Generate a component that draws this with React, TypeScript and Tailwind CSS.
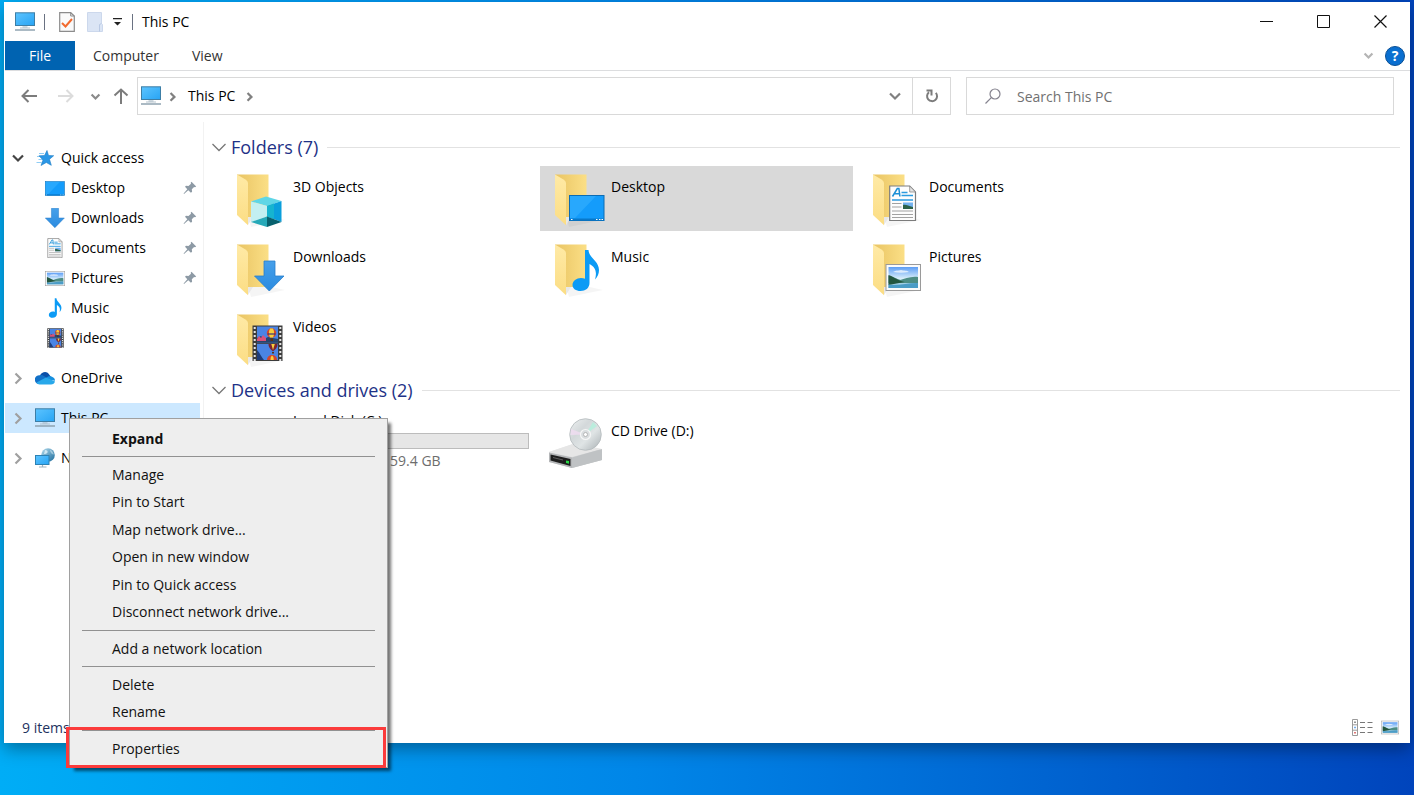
import { clsx } from 'clsx';
import type { ReactNode } from 'react';

/* ---------- shared gradients ---------- */

function Gradients() {
  return (
    <svg className="absolute size-0" aria-hidden="true">
      <defs>
        <linearGradient id="screen" x1="0" y1="0" x2="1" y2="1">
          <stop offset="0" stopColor="#5cc4ff" />
          <stop offset="1" stopColor="#28a4f4" />
        </linearGradient>
        <linearGradient id="folderBack" x1="0" y1="0" x2="1" y2="0">
          <stop offset="0" stopColor="#e9c463" />
          <stop offset="1" stopColor="#fbdf86" />
        </linearGradient>
        <linearGradient id="folderFlap" x1="0" y1="0" x2="0" y2="1">
          <stop offset="0" stopColor="#ffeaa6" />
          <stop offset="1" stopColor="#fbdd84" />
        </linearGradient>
        <linearGradient id="arrow" x1="0" y1="0" x2="0" y2="1">
          <stop offset="0" stopColor="#46a0ea" />
          <stop offset="1" stopColor="#2b8be0" />
        </linearGradient>
        <linearGradient id="sky" x1="0" y1="0" x2="0" y2="1">
          <stop offset="0" stopColor="#5c9df5" />
          <stop offset="0.55" stopColor="#d9eefb" />
          <stop offset="1" stopColor="#6fb0cf" />
        </linearGradient>
        <linearGradient id="disc" x1="0" y1="0" x2="1" y2="1">
          <stop offset="0" stopColor="#eef1f1" />
          <stop offset="0.35" stopColor="#d3d8da" />
          <stop offset="0.6" stopColor="#dfe4e5" />
          <stop offset="1" stopColor="#a9b0b3" />
        </linearGradient>
        <linearGradient id="drive" x1="0" y1="0" x2="1" y2="1">
          <stop offset="0" stopColor="#f1f1f1" />
          <stop offset="1" stopColor="#b9bcbf" />
        </linearGradient>
        <linearGradient id="globe" x1="0" y1="0" x2="1" y2="1">
          <stop offset="0" stopColor="#b4dcee" />
          <stop offset="1" stopColor="#1c6c9c" />
        </linearGradient>
      </defs>
    </svg>
  );
}

/* ---------- library artwork, drawn on the 50x54 folder canvas ---------- */

const DesktopArt = () => (
  <g>
    <rect x="14.5" y="21.5" width="34.5" height="25" fill="#149cfb" stroke="#0b6cb4" />
    <path d="M15 22h26L20 44h-5z" fill="#35b0ff" opacity=".6" />
    <path d="M15 44.5h34v2H15z" fill="#0878ca" />
    <path d="M16 45.5h1.5M41 45.5h1.5M44 45.5h1.5M46.5 45.5h1.5" stroke="#fff" />
  </g>
);

const DownloadArt = () => (
  <path d="M27 17h11v15h9L32.3 47 17.5 32H27z" fill="url(#arrow)" stroke="#2a7fcb" strokeWidth=".8" />
);

const DocumentArt = () => (
  <g>
    <path d="M16.7 12h20l5.800 6v28.500H16.700z" fill="#fdfdfd" stroke="#7c7c7c" strokeWidth="1.200" />
    <path d="M36.700 12v6h5.800z" fill="#e3e3e3" stroke="#8a8a8a" strokeWidth=".8" />
    <path d="m19.500 22.500 4.800-8h1.600l1 8m-5.200-2.700h4.700" fill="none" stroke="#1b8fd6" strokeWidth="1.500" />
    <path d="M28.500 18.500h6M28.500 21.500h11.500M19 26h21" stroke="#2b9be0" strokeWidth="1.600" />
    <path d="M19 29.500h9.500M19 33h9.500M19 37h21M19 40.500h21M19 43.500h21" stroke="#a2a2a2" strokeWidth="1.200" />
    <rect x="30" y="28.500" width="10" height="6.500" fill="#74b2ee" />
    <path d="M30 31c3-1 5 1 10 2v2H30z" fill="#2d6248" />
  </g>
);

const PictureArt = () => (
  <g>
    <rect x="13" y="20.500" width="34.500" height="26" fill="#fbfbfb" stroke="#9a9a9a" />
    <rect x="15.500" y="23" width="29.500" height="21" fill="url(#sky)" />
    <path d="M20 28c3-2 5-1 8-2 3 1 6 0 8 2-5 1-11 1-16 0z" fill="#fff" opacity=".7" />
    <path d="M15.500 32c5 0 8 3 12 4 4-1 10-4 17.500-3v6H15.500z" fill="#4d8d84" />
    <path d="M15.500 31c4 1 8 5 16 7l-16 3z" fill="#24563f" />
    <path d="M15.500 40.500c9 2 20-2 29.500-1.500v5H15.500z" fill="#4b9cc6" />
  </g>
);

const MusicArt = () => (
  <path
    d="M30 6h3.500c.5 8 10.500 11 10.500 20 0 4-1.500 7-4 9.500 2-7 1-12-5.500-15.500V39c0 5-4 8-9 8-4.500 0-8-2.300-8-6 0-4 4-7 8.500-7 1.500 0 2.800.2 4 .8z"
    fill="#0c9bf5"
  />
);

const VideoArt = () => (
  <g>
    <rect x="15.500" y="11.500" width="30" height="35.500" fill="#3c3c3c" />
    <path d="M17.700 13v34M43.300 13v34" stroke="#e4e4e4" strokeWidth="2" strokeDasharray="2 2" />
    <rect x="20" y="12.500" width="21" height="16" fill="#4a84e4" />
    <rect x="20" y="29.800" width="21" height="16.200" fill="#4a84e4" />
    <path d="M20 24l4-2 3 3 4-2 10 2v3.500H20z" fill="#27456e" />
    <path d="M20 25l2-3 2 2 2-3 3 3v3h-9z" fill="#d9527a" />
    <circle cx="34.500" cy="19" r="4.700" fill="#d4452c" />
    <path d="M33 14.500c-1.600 3-1.400 6 0 9h3c1.400-3 1.600-6 0-9z" fill="#f8cf3c" />
    <path d="M30.500 20h8" stroke="#3a2f7a" strokeWidth="1.200" />
    <path d="M33.500 24.500h2.500V27h-2.500z" fill="#5a3114" />
    <path d="M31.500 30h9c0 4-2.300 5.500-4.500 7.500-2-2-4.500-3.500-4.500-7.500z" fill="#7b2433" />
    <path d="M34.300 30h3.500L36 36z" fill="#f8cf3c" />
    <path d="M35 38h2v1.500h-2z" fill="#5a3114" />
    <path d="M30 46c0-3.500 2.500-5 5-5s5 1.500 5 5z" fill="#d4452c" />
    <path d="M33.500 46c0-2.500.5-3.800 1.500-4.500 1.200.7 1.700 2 1.700 4.500z" fill="#f8cf3c" />
    <path d="M20 36c3 3 5 8 7 10h-7z" fill="#1e3c7a" />
  </g>
);

const CubeArt = () => (
  <g>
    <path d="M14 27.500 29 22.500l15.500 4.500L30 32z" fill="#5fd6e6" />
    <path d="M14 27.500 30 32v10.500L14 48z" fill="#c3eff1" />
    <path d="M14 48l16-5.500V53z" fill="#27a9b8" />
    <path d="M30 32l14.500-5v21L30 42.500z" fill="#0a9fdc" />
    <path d="M30 32l7-2.400V45l-7-2.500z" fill="#16b4cf" />
    <path d="M30 42.500 44.500 48 30 53z" fill="#08616e" />
  </g>
);

function FolderIcon({ children }: { children: ReactNode }) {
  return (
    <svg className="shrink-0" width="50" height="54" viewBox="0 0 50 54" aria-hidden="true">
      <path d="M11 43h24l13 3-34 7z" fill="#000" opacity=".04" />
      <path d="M0 .5h31.500V43H4z" fill="url(#folderBack)" />
      <path d="M11 43v8l5-8z" fill="#e8e8e8" />
      <path d="M0 .5 8.500 5.500Q11 7 11 9v42.300L0 41z" fill="url(#folderFlap)" />
      {children}
    </svg>
  );
}

/* ---------- small icons ---------- */

function PcIcon() {
  return (
    <svg width="20" height="20" viewBox="0 0 20 20" aria-hidden="true">
      <rect x=".5" y=".8" width="19" height="12.700" fill="url(#screen)" stroke="#3d7ea6" />
      <path d="M7.500 14.500h5v1h-5z" fill="#9fb3c0" />
      <path d="M5 16h10" stroke="#b5c3cd" />
      <path d="M0 18h20" stroke="#8fa3b0" strokeWidth="1.500" />
    </svg>
  );
}

function Chevron({ d = 'down', className, small }: { d?: 'down' | 'right'; className?: string; small?: boolean }) {
  const size = small ? 11 : 14;
  return (
    <svg width={size} height={size} viewBox="0 0 14 14" fill="none" stroke="currentColor" strokeWidth={small ? 2.8 : 2.2} className={className} aria-hidden="true">
      <path d={d === 'down' ? 'M2 4.500 7 9.500l5-5' : 'M4.500 2.500 9.500 7.500l-5 5'} />
    </svg>
  );
}

const PinIcon = () => (
  <svg width="14" height="14" viewBox="0 0 14 14" fill="#8d9aa5" aria-hidden="true">
    <path d="M8.500.8 13.200 5.500 12 6.200l-.9-.3-2.300 2.400.3 2.500-1.200 1L5.300 9.300 1 13l-.4-.4L4.300 8.300 2 5.800l1-1.100 2.500.3L8 2.800l-.3-1z" />
  </svg>
);

const StarIcon = () => (
  <svg width="18" height="16" viewBox="0 0 18 16" aria-hidden="true">
    <path d="M3 3.500h5M1 6.500h5M2.500 9.500h4M.500 12.500h5" stroke="#8fcdf5" strokeWidth="1.200" />
    <path d="M11 .5l1.500 5 5.200.2-4.200 3.600 1.800 6-5-2.800L5 15.500 7 10 3 5.800l5.500-.3z" fill="#2a97e6" stroke="#1f7cc4" strokeWidth=".6" />
  </svg>
);

const CloudIcon = () => (
  <svg width="20" height="14" viewBox="0 0 20 14" aria-hidden="true">
    <path d="M5 4.500C6.500 1 11.500-.6 14 3.200L16 6 8 9z" fill="#0a4fa8" />
    <path d="M5 4.200c1.500-.3 3 .1 4.300 1L13 7.500 3.500 13A4.400 4.400 0 0 1 5 4.200z" fill="#1271c8" />
    <path d="M13 5.500c3-.8 7 .9 7 4.300L10 8z" fill="#1690df" />
    <path d="M1.500 11.500 11 6.500l9 4c-.5 2-2 3-4 3H4.500c-1.300 0-2.500-.7-3-2z" fill="#28a8ea" />
  </svg>
);

const NetworkIcon = () => (
  <svg width="20" height="20" viewBox="0 0 20 20" aria-hidden="true">
    <circle cx="13" cy="7" r="6.800" fill="url(#globe)" />
    <path d="M10 2c2 0 3 1 2.500 2.500S10 6 9 6z" fill="#e2f3fa" opacity=".8" />
    <path d="M15 1.500c2 1 3.500 3 3.800 5-1.800 0-3.800-2-3.800-5z" fill="#e2f3fa" opacity=".5" />
    <rect x=".5" y="7.500" width="13.500" height="9" fill="url(#screen)" stroke="#2d82b4" />
    <path d="M4 19h7.500M7.500 17v2" stroke="#9fb3c0" strokeWidth="1.200" />
  </svg>
);

function CdDriveIcon() {
  return (
    <svg className="shrink-0" width="56" height="52" viewBox="0 0 56 52" aria-hidden="true">
      <path d="M1 34 28 25l26 7v10L24 50 1 44z" fill="url(#drive)" />
      <path d="M1 34 28 25l26 6-30 8z" fill="#e6e6e6" />
      <path d="M24 39.500 54 31v11L24 50z" fill="#bfc2c4" />
      <path d="M1 34.500 24 39.500V50L1 44z" fill="#b4b6b8" />
      <path d="M2.500 36.500 22.500 41v7L2.500 42.500z" fill="#1e1e1e" />
      <path d="M5 39.500 15 42" stroke="#5f5f5f" />
      <path d="M18 42.500l3 .6v2.600l-3-.6z" fill="#27d845" />
      <circle cx="37.500" cy="16.500" r="15.800" fill="url(#disc)" stroke="#b4babc" strokeWidth=".8" />
      <path d="M37.500 16.500 45 4l4 4z" fill="#b3f0dc" opacity=".8" />
      <path d="M37.500 16.500 23 11l-.5 6z" fill="#f0dcf1" opacity=".8" />
      <circle cx="37.500" cy="16.500" r="5" fill="#d9dddf" stroke="#f6f6f6" strokeWidth="1.200" />
      <circle cx="37.500" cy="16.500" r="2" fill="#fff" stroke="#a9a9a9" strokeWidth=".8" />
    </svg>
  );
}

/* ---------- title bar, ribbon tabs, address bar ---------- */

function TitleBar() {
  return (
    <header className="flex h-[39px] items-center pl-2.5 pr-px">
      <PcIcon />
      <span className="ml-[9px] h-4 w-px bg-gray-500" />
      <button aria-label="Properties" className="ml-3.5">
        <svg width="16" height="20" viewBox="0 0 16 20" aria-hidden="true">
          <path d="M.7.700h11L15.300 4v15.300H.700z" fill="#fafafa" stroke="#8c8c8c" strokeWidth="1.200" />
          <path d="M11.700.700V4h3.600" fill="none" stroke="#8c8c8c" />
          <path d="m3 11 3.500 3.500L13 7" fill="none" stroke="#f26a2e" strokeWidth="2" />
        </svg>
      </button>
      <button aria-label="New folder" className="ml-3">
        <svg width="16" height="20" viewBox="0 0 16 20" aria-hidden="true">
          <path d="M.500.500h14v11l1 1v7H.500z" fill="#dbe5f5" stroke="#ccd8ec" />
          <path d="M12.500 19.500v-7l2-1" fill="none" stroke="#b9c9e4" />
        </svg>
      </button>
      <button aria-label="Customize Quick Access Toolbar" className="ml-2.5">
        <svg width="9" height="8" viewBox="0 0 9 8" aria-hidden="true">
          <path d="M0 0h9v1.200H0zM1 4h7L4.500 7.500z" fill="#222" />
        </svg>
      </button>
      <span className="ml-2.5 h-4 w-px bg-gray-500" />
      <h1 className="ml-[9px] text-sm">This PC</h1>
      <div className="ml-auto flex h-full">
        <button aria-label="Minimize" className="grid w-[57px] place-items-center">
          <svg width="13" height="13" viewBox="0 0 13 13" stroke="#111"><path d="M0 6.500h13" /></svg>
        </button>
        <button aria-label="Maximize" className="grid w-[57px] place-items-center">
          <svg width="13" height="13" viewBox="0 0 13 13" stroke="#111" fill="none"><path d="M.500.500h12v12H.500z" /></svg>
        </button>
        <button aria-label="Close" className="grid w-[57px] place-items-center">
          <svg width="13" height="13" viewBox="0 0 13 13" stroke="#111" strokeWidth="1.200"><path d="m.500.500 12 12M12.500.500l-12 12" /></svg>
        </button>
      </div>
    </header>
  );
}

function RibbonTabs() {
  return (
    <div className="flex h-[30px] items-center border-b border-[#dcdddf] pr-[5px] text-sm text-[#333]">
      <button className="h-full w-[70px] bg-[#0063b1] text-white">File</button>
      <button className="ml-[18px]">Computer</button>
      <button className="ml-[33px]">View</button>
      <button aria-label="Expand the Ribbon" className="ml-auto mr-[11px] text-[#b4b4b4]">
        <Chevron small />
      </button>
      <button aria-label="Help" className="grid size-5 place-items-center rounded-full border border-[#0a4f94] bg-[#0a6fd0] text-sm leading-none font-bold text-white">
        ?
      </button>
    </div>
  );
}

function AddressRow() {
  return (
    <div className="flex items-center pl-4 pr-4 pt-1.5 text-[#777]">
      <button aria-label="Back">
        <svg width="16" height="14" viewBox="0 0 16 14" fill="none" stroke="#7c7c7c" strokeWidth="2"><path d="M7.500 1 1.500 7l6 6M1.500 7H16" /></svg>
      </button>
      <button aria-label="Forward" className="ml-[21px]">
        <svg width="16" height="14" viewBox="0 0 16 14" fill="none" stroke="#dcdcdc" strokeWidth="2"><path d="m8.500 1 6 6-6 6M14.500 7H0" /></svg>
      </button>
      <button aria-label="Recent locations" className="ml-4 text-[#8a8a8a]">
        <Chevron small />
      </button>
      <button aria-label="Up" className="ml-3">
        <svg width="16" height="16" viewBox="0 0 16 16" fill="none" stroke="#7c7c7c" strokeWidth="2"><path d="M1.500 7.500 8 1.500l6.500 6M8 1.500V16" /></svg>
      </button>
      <div className="ml-2 flex h-[38px] flex-1 items-center border border-[#d9d9d9] pl-[3px] text-sm text-black">
        <PcIcon />
        <Chevron d="right" small className="ml-1.5 text-[#808080]" />
        <button className="ml-2.5">This PC</button>
        <Chevron d="right" small className="ml-[9px] text-[#808080]" />
        <button aria-label="Previous locations" className="ml-auto mr-2.5 text-[#808080]">
          <Chevron />
        </button>
        <button aria-label="Refresh" className="grid h-full w-[38px] place-items-center border-l border-[#d9d9d9]">
          <svg width="14" height="14" viewBox="0 0 14 14" fill="none" stroke="#7c7c7c" strokeWidth="2">
            <path d="M10.800 3.800A5 5 0 1 1 4 3.200M1.500 1.500h5V6.500" />
          </svg>
        </button>
      </div>
      <label className="ml-[15px] flex h-[38px] w-[428px] items-center border border-[#d9d9d9] pl-[18px]">
        <svg width="16" height="16" viewBox="0 0 16 16" fill="none" stroke="#85838f" strokeWidth="1.200" aria-hidden="true">
          <circle cx="10" cy="6" r="5" />
          <path d="M6.300 9.700.500 15.500" />
        </svg>
        <input
          aria-label="Search This PC"
          placeholder="Search This PC"
          className="ml-4 h-8 min-w-0 flex-1 bg-transparent text-sm outline-none placeholder:text-[#717171]"
        />
      </label>
    </div>
  );
}

/* ---------- navigation pane ---------- */

const QUICK_ACCESS: { label: string; pinned: boolean; icon: ReactNode }[] = [
  { label: 'Desktop', pinned: true, icon: <svg width="20" height="15" viewBox="14 21 36 26"><DesktopArt /></svg> },
  { label: 'Downloads', pinned: true, icon: <svg width="20" height="20" viewBox="17 16.500 31 31"><DownloadArt /></svg> },
  { label: 'Documents', pinned: true, icon: <svg width="16" height="20" viewBox="16 11 27.500 36"><DocumentArt /></svg> },
  { label: 'Pictures', pinned: true, icon: <svg width="20" height="15" viewBox="12 20 36 27"><PictureArt /></svg> },
  { label: 'Music', pinned: false, icon: <svg width="16" height="20" viewBox="16 5.500 29 42"><MusicArt /></svg> },
  { label: 'Videos', pinned: false, icon: <svg width="17" height="20" viewBox="15 11 31 36.500"><VideoArt /></svg> },
];

function NavRoot({ label, icon, open, selected }: { label: string; icon: ReactNode; open?: boolean; selected?: boolean }) {
  return (
    <button className={clsx('flex h-[30px] w-full items-center pl-1.5', selected && 'bg-[#cce8ff]')}>
      <Chevron d={open ? 'down' : 'right'} className={open ? 'text-[#444]' : 'text-[#a0a0a0]'} />
      <span className="ml-2.5 mr-1.5 grid w-5 place-items-center">{icon}</span>
      {label}
    </button>
  );
}

function NavigationPane() {
  return (
    <nav className="flex w-[199px] shrink-0 flex-col gap-2.5 border-r border-[#f2f2f2] pr-[3px] pt-[21px] text-sm">
      <div>
        <NavRoot label="Quick access" icon={<StarIcon />} open />
        {QUICK_ACCESS.map((item) => (
          <button key={item.label} className="flex h-[30px] w-full items-center pl-10 pr-[3px]">
            <span className="mr-1.5 grid w-5 place-items-center">{item.icon}</span>
            {item.label}
            {item.pinned && <span className="ml-auto"><PinIcon /></span>}
          </button>
        ))}
      </div>
      <NavRoot label="OneDrive" icon={<CloudIcon />} />
      <NavRoot label="This PC" icon={<PcIcon />} selected />
      <NavRoot label="Network" icon={<NetworkIcon />} />
    </nav>
  );
}

/* ---------- contents ---------- */

const FOLDERS: { label: string; art: ReactNode }[] = [
  { label: '3D Objects', art: <CubeArt /> },
  { label: 'Desktop', art: <DesktopArt /> },
  { label: 'Documents', art: <DocumentArt /> },
  { label: 'Downloads', art: <DownloadArt /> },
  { label: 'Music', art: <MusicArt /> },
  { label: 'Pictures', art: <PictureArt /> },
  { label: 'Videos', art: <VideoArt /> },
];

function GroupHeader({ children }: { children: ReactNode }) {
  return (
    <h2 className="flex h-[26px] items-center text-lg text-[#1e3287]">
      <svg width="14" height="14" viewBox="0 0 14 14" fill="none" stroke="#777" strokeWidth="1.300" className="mr-[5px]" aria-hidden="true">
        <path d="m.500 4 6.500 6.500L13.500 4" />
      </svg>
      {children}
      <span className="ml-[9px] h-px flex-1 bg-[#e2e2e2]" />
    </h2>
  );
}

function Contents() {
  const used = 34;
  return (
    <main className="min-w-0 flex-1 pl-2 pr-2.5 pt-3">
      <GroupHeader>Folders (7)</GroupHeader>
      <div className="ml-2.5 mt-1.5 grid grid-cols-[repeat(auto-fill,313px)] gap-[5px]">
        {FOLDERS.map((f) => (
          <button key={f.label} className={clsx('flex h-[65px] items-start pl-[15px] pt-2 text-left text-sm', f.label === 'Desktop' && 'bg-[#d9d9d9]')}>
            <FolderIcon>{f.art}</FolderIcon>
            <span className="ml-1.5 mt-[3px]">{f.label}</span>
          </button>
        ))}
      </div>
      <div className="mt-1.5">
        <GroupHeader>Devices and drives (2)</GroupHeader>
      </div>
      <div className="ml-2.5 mt-[7px] grid grid-cols-[repeat(auto-fill,313px)] gap-[5px] text-sm">
        <button className="flex h-[65px] flex-col pl-[71px] pr-1.5 pt-px text-left">
          <span>Local Disk (C:)</span>
          <span className="mt-0.5 block h-4 w-full shrink-0 border border-[#bcbcbc] bg-[#e6e6e6]">
            <span className="block h-full bg-[#26a0da]" style={{ width: `${used}%` }} />
          </span>
          <span className="mt-0.5 text-[#6d6d6d]">38.9GB free of 59.4 GB</span>
        </button>
        <button className="flex h-[65px] items-start pl-2 pt-2 text-left">
          <CdDriveIcon />
          <span className="ml-[7px] mt-[3px]">CD Drive (D:)</span>
        </button>
      </div>
    </main>
  );
}

function StatusBar() {
  return (
    <footer className="flex h-[31px] items-center pl-[17px] pr-[11px] text-sm text-[#1e3260]">
      9 items
      <button aria-label="Details view" className="ml-auto">
        <svg width="21" height="17" viewBox="0 0 21 17" fill="none" aria-hidden="true">
          <path d="M.500.500h5v16h-5zM.500 5.800h5M.500 11.200h5" stroke="#9a9a9a" />
          <path d="M2.300 3.200h1.400" stroke="#666" strokeWidth="1.400" />
          <path d="M2.300 8.500h1.400" stroke="#3b8de8" strokeWidth="1.400" />
          <path d="M2.300 13.800h1.400" stroke="#d23c3c" strokeWidth="1.400" />
          <path d="M8 3.500h5M15.500 3.500h5M8 8.500h5M15.500 8.500h5M8 13.500h5M15.500 13.500h5" stroke="#777" />
        </svg>
      </button>
      <button aria-label="Large icons view" className="ml-2">
        <svg width="18" height="15" viewBox="12 20 36 27" aria-hidden="true"><PictureArt /></svg>
      </button>
    </footer>
  );
}

/* ---------- context menu ---------- */

const Separator = () => <hr className="mx-3 my-1 border-t border-[#919191]" />;

function MenuItem({ children, bold }: { children: ReactNode; bold?: boolean }) {
  return (
    <button role="menuitem" className={clsx('flex min-h-[27px] w-full items-center pl-[42px]', bold && 'font-bold')}>
      {children}
    </button>
  );
}

function ContextMenu() {
  return (
    <div role="menu" className="absolute left-[69px] top-[418px] w-[319px] border border-[#a0a0a0] bg-[#eeeeee] pb-[5px] pt-1.5 text-sm text-[#111] shadow-[4px_4px_3px_-1px_rgba(0,0,0,0.55)]">
      <MenuItem bold>Expand</MenuItem>
      <Separator />
      <div className="grid h-[165px] grid-rows-6">
        <MenuItem>Manage</MenuItem>
        <MenuItem>Pin to Start</MenuItem>
        <MenuItem>Map network drive...</MenuItem>
        <MenuItem>Open in new window</MenuItem>
        <MenuItem>Pin to Quick access</MenuItem>
        <MenuItem>Disconnect network drive...</MenuItem>
      </div>
      <Separator />
      <MenuItem>Add a network location</MenuItem>
      <Separator />
      <div className="grid h-[55px] grid-rows-2">
        <MenuItem>Delete</MenuItem>
        <MenuItem>Rename</MenuItem>
      </div>
      <Separator />
      <MenuItem>Properties</MenuItem>
      {/* highlight around the last entry */}
      <span className="pointer-events-none absolute -bottom-px -left-1 h-[41px] w-80 border-3 border-[#fb3b3b]" />
    </div>
  );
}

export default function App() {
  return (
    <div className="relative flex min-h-screen flex-col bg-linear-to-r from-[#00adf6] via-[#0086e8] via-45% to-[#0044bc] px-1 pb-[52px] pt-0.5 font-['Open_Sans','Noto_Sans',sans-serif] text-black">
      <Gradients />
      <div className="flex flex-1 flex-col border-l border-white bg-white shadow-[0_6px_16px_rgba(0,0,0,0.35)]">
        <TitleBar />
        <RibbonTabs />
        <AddressRow />
        <div className="flex flex-1 pt-[7px]">
          <NavigationPane />
          <Contents />
        </div>
        <StatusBar />
      </div>
      <ContextMenu />
    </div>
  );
}
